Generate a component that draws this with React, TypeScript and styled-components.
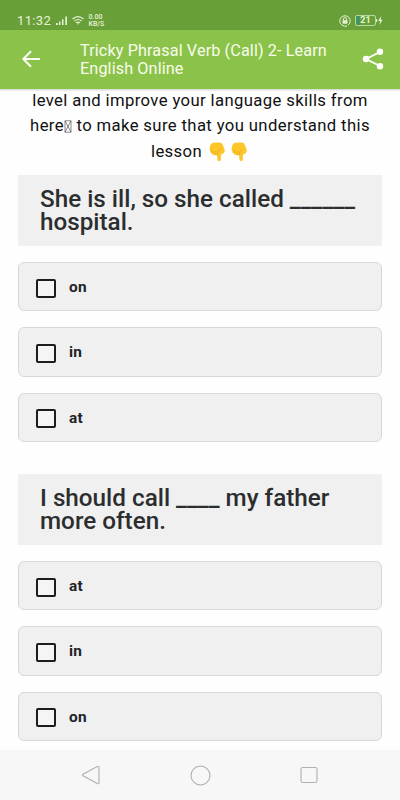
import React from "react";
import styled, { createGlobalStyle } from "styled-components";

const Global = createGlobalStyle`
  * { box-sizing: border-box; }
  html, body { margin: 0; padding: 0; background: #fefefe; }
  body { font-family: Roboto, sans-serif; overflow: hidden; }
`;

const Screen = styled.div`
  width: 400px;
  height: 800px;
  display: flex;
  flex-direction: column;
  background: #fefefe;
  overflow: hidden;
`;

const StatusBar = styled.div`
  height: 29.5px;
  flex: none;
  background: #689f38;
  color: #e6f2d6;
  display: flex;
  align-items: center;
  padding: 12px 17px 0;
`;

const Clock = styled.span`
  font-size: 13px;
  line-height: 16px;
  letter-spacing: 0.35px;
  width: 38px;
  white-space: nowrap;
`;

const Rate = styled.span`
  display: flex;
  flex-direction: column;
  font-size: 7px;
  line-height: 6.8px;
  font-weight: 500;
  margin-left: 4.5px;
  flex: 1;
`;

const StatusIcon = styled.svg<{ $gap?: number }>`
  display: block;
  flex: none;
  margin-left: ${(p) => p.$gap ?? 0}px;
`;

const Battery = styled.span`
  width: 21px;
  height: 11px;
  margin-left: 4px;
  border: 1px solid #b9d89a;
  border-radius: 2px;
  background: linear-gradient(90deg, #41965e 20%, transparent 20%);
  font-size: 9px;
  line-height: 9.5px;
  font-weight: 700;
  text-align: center;
`;

const AppBar = styled.header`
  height: 59px;
  flex: none;
  display: flex;
  align-items: center;
  background: #8bc34a;
  padding: 0 15px 0 20px;
  box-shadow: 0 1px 2px rgba(80, 100, 50, 0.3);
  z-index: 1;
`;

const Title = styled.h1`
  flex: 1;
  margin: 2px 0 0 38px;
  color: #f8fcec;
  font-size: 16.2px;
  letter-spacing: 0.12px;
  font-weight: 400;
  line-height: 18.5px;
`;

const Line = styled.span`
  display: block;
  white-space: nowrap;
`;

const Content = styled.main`
  flex: 1;
  min-height: 0;
  padding: 0 18px;
  overflow: hidden;
`;

const Intro = styled.div`
  height: 86.5px;
  color: #111;
  font-size: 16.7px;
  letter-spacing: 0.37px;
  line-height: 25.7px;
  text-align: center;
`;

const IntroLine = styled(Line)`
  display: flex;
  justify-content: center;
  align-items: center;
  white-space: pre;

  &:first-child {
    height: 24.7px;
    line-height: 23.7px;
  }
`;

const Hands = styled.svg`
  margin-left: 6px;
`;

const Quiz = styled.section`
  height: 299px;
`;

const Question = styled.h2`
  height: 71px;
  margin: 0 0 16px;
  padding: 12.5px 22px 0;
  background: #f0f0f0;
  color: #2b2d2f;
  font-size: 24.25px;
  font-weight: 500;
  line-height: 23.2px;
`;

const Options = styled.div`
  display: flex;
  flex-direction: column;
  gap: 16px;
`;

const Option = styled.label`
  height: 49.3px;
  display: flex;
  align-items: center;
  padding: 1px 17px 0;
  gap: 13px;
  background: #f0f0f0;
  border: 1px solid #d8d8d8;
  border-bottom-width: 1.5px;
  border-radius: 6px;
  color: #222426;
  font-size: 15.4px;
  letter-spacing: 0.3px;
  font-weight: 700;
`;

const Box = styled.span`
  width: 20px;
  height: 19px;
  margin-top: 2px;
  border: 2px solid #1d1d1d;
  border-radius: 2px;
  background: #f5f5f5;
`;

const NavBar = styled.nav`
  height: 50px;
  flex: none;
  display: grid;
  grid-template-columns: repeat(3, 109px);
  justify-content: center;
  place-items: center;
  background: #f7f7f7;
`;

const Glyph = styled.svg`
  fill: none;
  stroke: #b0b0b0;
  stroke-width: 1.1;
`;

const Hand = ({ x }: { x: number }) => (
  <g transform={`translate(${x} 0)`}>
    <path
      d="M4 .8 Q8 0 12 .8 C13.6 1.4 14.2 4 15.4 7 C16.2 9 15.6 10.8 14 11.6 L12 12.8 L11.8 17.8 C11.6 19.6 8.6 19.6 8.4 17.8 L8.1 13 Q6.6 14.2 5.6 12.8 Q3.4 13.4 3 11.4 Q1.2 11.2 1.2 9.2 Q.2 8.4 .7 6.4 C1 3.6 2 1.2 4 .8Z"
      fill="#fdc72a"
    />
    <path d="M3 11.2 L3.7 8 M5.7 12.6 L6.2 9 M8.2 13 L8.4 9.4 Q10.8 9.3 11.6 7" stroke="#e5a11b" strokeWidth=".7" fill="none" />
  </g>
);

const quizzes = [
  { lines: ["She is ill, so she called ______", "hospital."], options: ["on", "in", "at"] },
  { lines: ["I should call ____ my father", "more often."], options: ["at", "in", "on"] },
];

export default function App() {
  return (
    <Screen>
      <Global />
      <StatusBar>
        <Clock>11:32</Clock>
        <StatusIcon width="13" height="11" viewBox="0 0 13 11" fill="#e6f2d6">
          <path d="M1 8h1.8v2H1zM4 6.5h1.5V10H4zM7 4.2h1.5V10H7zM10.3 1.4H12V10h-1.7z" />
        </StatusIcon>
        <StatusIcon $gap={4} width="12" height="11" viewBox="0 0 12 11" fill="none" stroke="#e6f2d6" strokeWidth="1.2">
          <path d="M.5 4Q6-.8 11.5 4M2.4 6Q6 3 9.6 6M4.1 7.8Q6 6.3 7.9 7.8" />
          <path d="M4.8 8.4h2.4L6 9.8z" fill="#e6f2d6" stroke="none" />
        </StatusIcon>
        <Rate>
          <span>0.00</span>
          <span>KB/S</span>
        </Rate>
        <StatusIcon width="12" height="12" viewBox="0 0 12 12" fill="none" stroke="#e6f2d6">
          <path d="M3 10.2A5.2 5.2 0 1 1 9 10.2M3 10.2Q6 12 8 11" />
          <path d="M4.4 5.5V4.2a1.6 1.6 0 0 1 3.2 0v1.3" />
          <rect x="3.6" y="5.2" width="4.8" height="3.5" fill="#e6f2d6" stroke="none" />
        </StatusIcon>
        <Battery>21</Battery>
        <StatusIcon width="7" height="11" viewBox="0 0 7 11" fill="#e6f2d6">
          <path d="M0 4h1.2v3H0zM5.2 1L2.2 6h1.9L3.4 10 6.6 4.8H4.7z" />
        </StatusIcon>
      </StatusBar>
      <AppBar>
        <svg width="22" height="20" viewBox="0 0 22 20" fill="none" stroke="#fbfef4" strokeWidth="2">
          <path d="M20 10H3.5M11 2.3L3.3 10l7.7 7.7" />
        </svg>
        <Title>
          <Line>Tricky Phrasal Verb (Call) 2- Learn</Line>
          <Line>English Online</Line>
        </Title>
        <svg width="24" height="24" viewBox="0 0 24 24" fill="#fff">
          <path d="M20 4.5L5 12l15 7.5" fill="none" stroke="#fff" strokeWidth="1.9" />
          <circle cx="19" cy="4.8" r="3.2" />
          <circle cx="5" cy="12" r="3.2" />
          <circle cx="19" cy="19.2" r="3.2" />
        </svg>
      </AppBar>
      <Content>
        <Intro>
          <IntroLine>level and improve your language skills from</IntroLine>
          <IntroLine>
            here
            <svg width="8" height="13" viewBox="0 0 8 13" fill="none" stroke="#555" strokeWidth=".7">
              <path d="M1 .8h6v11.4H1zM1 .8l6 11.4M7 .8L1 12.2" />
            </svg>
            {" to make sure that you understand this"}
          </IntroLine>
          <IntroLine>
            lesson
            <Hands width="41" height="20" viewBox="0 0 41 20">
              <Hand x={1} />
              <Hand x={23} />
            </Hands>
          </IntroLine>
        </Intro>
        {quizzes.map((quiz) => (
          <Quiz key={quiz.lines[0]}>
            <Question>
              {quiz.lines.map((line) => (
                <Line key={line}>{line}</Line>
              ))}
            </Question>
            <Options>
              {quiz.options.map((option) => (
                <Option key={option}>
                  <Box />
                  {option}
                </Option>
              ))}
            </Options>
          </Quiz>
        ))}
      </Content>
      <NavBar>
        <Glyph width="20" height="20" viewBox="0 0 20 20">
          <path d="M16.3 1.5Q18 .8 18 2.5v15q0 1.8-1.7 1L2 10.7q-1-.7 0-1.4z" />
        </Glyph>
        <Glyph width="21" height="21" viewBox="0 0 21 21">
          <circle cx="10.5" cy="10.5" r="9.5" />
        </Glyph>
        <Glyph width="18" height="18" viewBox="0 0 18 18">
          <rect x="1" y="1.5" width="16" height="15" rx="1.8" />
        </Glyph>
      </NavBar>
    </Screen>
  );
}
